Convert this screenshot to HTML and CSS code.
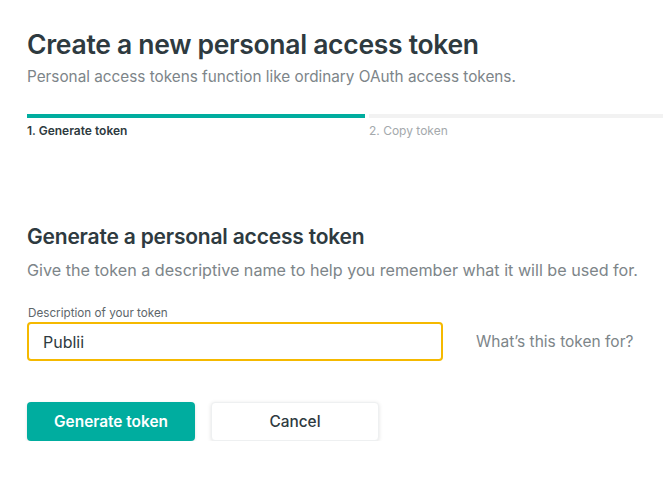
FILE: index.html
```html
<!DOCTYPE html>
<html lang="en">
  <head>
    <meta charset="UTF-8" />
    <meta name="viewport" content="width=device-width, initial-scale=1.0" />
    <title>Create a new personal access token</title>
    <link rel="stylesheet" href="styles.css">
  </head>
  <body>
    <h1 class="title">Create a new personal access token</h1>
    <p class="subtitle">Personal access tokens function like ordinary OAuth access tokens.</p>

    <div class="steps">
      <div class="step active">1. Generate token</div>
      <div class="step">2. Copy token</div>
    </div>

    <form class="token-form" onsubmit="return false;">
      <h2 class="section-title">Generate a personal access token</h2>
      <p class="section-desc">Give the token a descriptive name to help you remember what it will be used for.</p>

      <label class="field-label" for="description">Description of your token</label>
      <div class="field-row">
        <input type="text" id="description" value="Publii" />
        <span class="help">What’s this token for?</span>
      </div>

      <div class="actions">
        <button type="submit" class="btn btn-primary">Generate token</button>
        <button type="button" class="btn btn-default">Cancel</button>
      </div>
    </form>
  </body>
</html>
```

FILE: styles.css
```css
body {
  font-family: Inter, "Noto Sans", sans-serif;
  margin: 0;
  padding: 28px 0 0 27px;
  color: #2e3a40;
  background: #fff;
  overflow: hidden;
}
.title {
  font-size: 26.5px;
  font-weight: 600;
  letter-spacing: -0.3px;
  margin: 0;
  line-height: 32px;
}
.subtitle {
  font-size: 15.3px;
  color: #7d8589;
  margin: 7px 0 0;
  line-height: 20px;
}
.steps {
  display: flex;
  gap: 4px;
  margin-top: 27px;
}
.step {
  flex: 1;
  border-top: 4px solid #f2f2f2;
  padding-top: 5px;
  font-size: 12px;
  line-height: 16px;
  color: #a4a9ac;
}
.step.active {
  flex: 0 0 338px;
  border-top-color: #00ad9f;
  color: #2e3a40;
  font-weight: 600;
  font-size: 12px;
}
.token-form {
  margin-top: 85px;
}
.section-title {
  font-size: 21px;
  font-weight: 600;
  letter-spacing: -0.2px;
  margin: 0;
  line-height: 26px;
}
.section-desc {
  font-size: 16.15px;
  color: #7d8589;
  margin: 9px 0 0;
  line-height: 22px;
}
.field-label {
  display: block;
  margin-top: 25px;
  font-size: 11.7px;
  line-height: 14px;
  color: #5d666b;
  padding-left: 1px;
}
.field-row {
  display: flex;
  align-items: center;
  gap: 33px;
  margin-top: 2px;
}
input {
  width: 416px;
  height: 39px;
  box-sizing: border-box;
  border: 2px solid #f5b900;
  border-radius: 4px;
  padding: 0 14px;
  font-family: inherit;
  font-size: 16px;
  color: #2e3a40;
  outline: none;
}
.help {
  font-size: 15.5px;
  color: #7d8589;
}
.actions {
  display: flex;
  gap: 16px;
  margin-top: 41px;
}
.btn {
  height: 39px;
  border-radius: 4px;
  font-family: inherit;
  font-size: 15.4px;
  font-weight: 500;
  cursor: pointer;
}
.btn-primary {
  width: 168px;
  background: #00ad9f;
  border: none;
  color: #fff;
  font-weight: 600;
  box-shadow: 0 1px 3px rgba(0, 0, 0, 0.12);
}
.btn-default {
  width: 168px;
  background: #fff;
  border: 1px solid #eef0f1;
  color: #2e3a40;
  box-shadow: 0 1px 4px rgba(0, 0, 0, 0.12);
}
```
